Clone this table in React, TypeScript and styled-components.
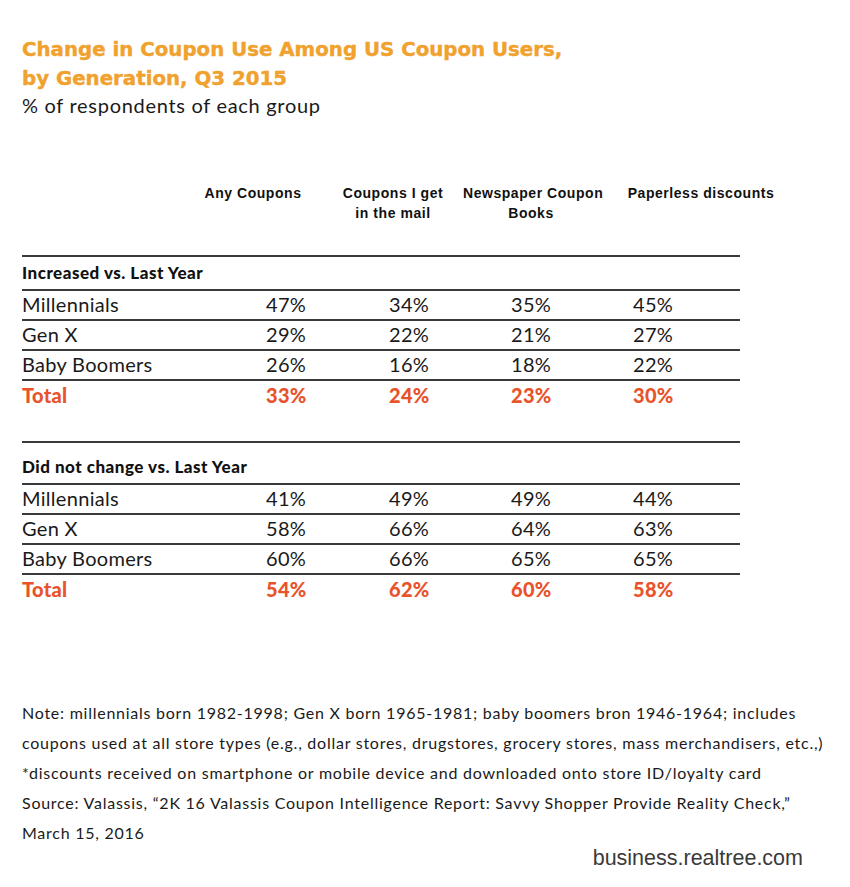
import styled, { createGlobalStyle } from 'styled-components'

const GlobalStyle = createGlobalStyle`
  html, body {
    margin: 0;
    padding: 0;
    background: #ffffff;
  }
`

const Page = styled.div({
  width: '850px',
  height: '887px',
  boxSizing: 'border-box',
  padding: '35px 0 0 22px',
  background: '#ffffff',
  display: 'flex',
  flexDirection: 'column'
})

const Title = styled.h1({
  margin: 0,
  fontFamily: '"DejaVu Sans", "Liberation Sans", sans-serif',
  fontWeight: 700,
  fontSize: '19.8px',
  lineHeight: '29px',
  color: '#f0a12e',
  WebkitTextStroke: '0.4px #f0a12e'
})

const Subtitle = styled.div({
  fontFamily: 'Lato, sans-serif',
  fontSize: '20px',
  lineHeight: '27px',
  letterSpacing: '0.7px',
  color: '#1a1a1a',
  marginTop: '-1px'
})

const HeaderRow = styled.div({
  display: 'grid',
  gridTemplateColumns: '140px 140px 136px 204px',
  paddingLeft: '161px',
  marginTop: '64px',
  fontFamily: '"Liberation Sans", Arial, sans-serif',
  fontWeight: 700,
  fontSize: '14px',
  lineHeight: '20px',
  letterSpacing: '0.55px',
  color: '#111111',
  textAlign: 'center',
  whiteSpace: 'nowrap'
})

const Section = styled.div<{ $gap: number }>(({ $gap }) => ({
  width: '718px',
  marginTop: `${$gap}px`,
  borderTop: '2px solid #3a3a3a'
}))

const SectionTitle = styled.div<{ $height: number }>(({ $height }) => ({
  height: `${$height}px`,
  boxSizing: 'border-box',
  display: 'flex',
  alignItems: 'flex-end',
  paddingBottom: '6px',
  borderBottom: '2px solid #3a3a3a',
  fontFamily: 'Lato, sans-serif',
  fontWeight: 900,
  fontSize: '17px',
  letterSpacing: '0.5px',
  color: '#111111'
}))

const Row = styled.div<{ $total?: boolean }>(({ $total }) => ({
  display: 'grid',
  gridTemplateColumns: '244px 123px 122px 122px 107px',
  height: '30px',
  boxSizing: 'border-box',
  paddingBottom: '2px',
  alignItems: 'center',
  borderBottom: $total ? 'none' : '2px solid #3a3a3a',
  fontFamily: 'Lato, sans-serif',
  fontWeight: $total ? 900 : 400,
  fontSize: '20px',
  letterSpacing: '0.3px',
  color: $total ? '#e8532b' : '#1a1a1a'
}))

const Notes = styled.div({
  marginTop: '93px',
  fontFamily: 'Lato, sans-serif',
  fontSize: '16px',
  lineHeight: '30px',
  letterSpacing: '0.75px',
  color: '#1a1a1a'
})

const Credit = styled.div({
  width: '781px',
  textAlign: 'right',
  marginTop: '-2px',
  fontFamily: '"Liberation Sans", Arial, sans-serif',
  fontSize: '21.5px',
  color: '#3a3a3a'
})

type Group = { name: string; values: string[] }

const increased: Group[] = [
  { name: 'Millennials', values: ['47%', '34%', '35%', '45%'] },
  { name: 'Gen X', values: ['29%', '22%', '21%', '27%'] },
  { name: 'Baby Boomers', values: ['26%', '16%', '18%', '22%'] },
  { name: 'Total', values: ['33%', '24%', '23%', '30%'] }
]

const unchanged: Group[] = [
  { name: 'Millennials', values: ['41%', '49%', '49%', '44%'] },
  { name: 'Gen X', values: ['58%', '66%', '64%', '63%'] },
  { name: 'Baby Boomers', values: ['60%', '66%', '65%', '65%'] },
  { name: 'Total', values: ['54%', '62%', '60%', '58%'] }
]

const TableSection = ({ title, rows, gap, head }: { title: string; rows: Group[]; gap: number; head: number }) => (
  <Section $gap={gap}>
    <SectionTitle $height={head}>{title}</SectionTitle>
    {rows.map((r) => (
      <Row key={r.name} $total={r.name === 'Total'}>
        <span>{r.name}</span>
        {r.values.map((v, i) => (
          <span key={i}>{v}</span>
        ))}
      </Row>
    ))}
  </Section>
)

const App = () => {
  return (
    <Page>
      <GlobalStyle />
      <Title>
        Change in Coupon Use Among US Coupon Users,
        <br />
        by Generation, Q3 2015
      </Title>
      <Subtitle>% of respondents of each group</Subtitle>
      <HeaderRow>
        <span>Any Coupons</span>
        <span>
          Coupons I get
          <br />
          in the mail
        </span>
        <span>
          Newspaper Coupon
          <br />
          Books
        </span>
        <span>Paperless discounts</span>
      </HeaderRow>
      <TableSection title="Increased vs. Last Year" rows={increased} gap={32} head={34} />
      <TableSection title="Did not change vs. Last Year" rows={unchanged} gap={30} head={42} />
      <Notes>
        Note: millennials born 1982-1998; Gen X born 1965-1981; baby boomers bron 1946-1964; includes
        <br />
        coupons used at all store types (e.g., dollar stores, drugstores, grocery stores, mass merchandisers, etc.,)
        <br />
        *discounts received on smartphone or mobile device and downloaded onto store ID/loyalty card
        <br />
        Source: Valassis, “2K 16 Valassis Coupon Intelligence Report: Savvy Shopper Provide Reality Check,”
        <br />
        March 15, 2016
      </Notes>
      <Credit>business.realtree.com</Credit>
    </Page>
  )
}

export default App
